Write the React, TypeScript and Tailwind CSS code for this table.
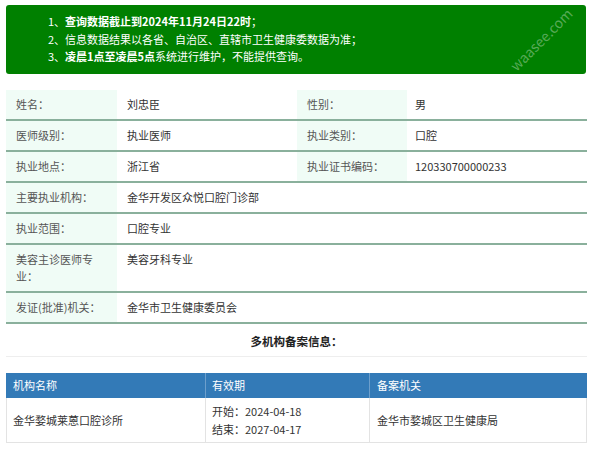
import React from 'react';

const font = { fontFamily: '"Noto Sans CJK SC", "Liberation Sans", sans-serif' };

type Cell = { label: string; value: string };

const rows: Array<[Cell, Cell | null]> = [
  [{ label: '姓名：', value: '刘忠臣' }, { label: '性别：', value: '男' }],
  [{ label: '医师级别：', value: '执业医师' }, { label: '执业类别：', value: '口腔' }],
  [{ label: '执业地点：', value: '浙江省' }, { label: '执业证书编码：', value: '120330700000233' }],
  [{ label: '主要执业机构：', value: '金华开发区众悦口腔门诊部' }, null],
  [{ label: '执业范围：', value: '口腔专业' }, null],
  [{ label: '美容主诊医师专业：', value: '美容牙科专业' }, null],
  [{ label: '发证(批准)机关：', value: '金华市卫生健康委员会' }, null],
];

export default function App() {
  return (
    <div className="relative min-h-[455px] w-[600px] overflow-hidden bg-white text-[11px] text-[#333]" style={font}>
      <div className="ml-[6px] w-[580px] pt-[5px]">
        {/* Notice box */}
        <div className="relative overflow-hidden rounded-[3px] bg-[#008000] py-[8px] pl-[42px] leading-[17.5px] text-white">
          <p>
            1、<b>查询数据截止到2024年11月24日22时</b>；
          </p>
          <p>2、信息数据结果以各省、自治区、直辖市卫生健康委数据为准；</p>
          <p>
            3、<b>凌晨1点至凌晨5点</b>系统进行维护，不能提供查询。
          </p>
          {/* watermark */}
          <span className="pointer-events-none absolute right-[4px] top-[26px] -rotate-45 select-none whitespace-nowrap text-[14px] text-white/35">
            waasee.com
          </span>
        </div>

        {/* Detail table */}
        <div className="mt-[16px] w-[581px]">
          {rows.map(([a, b], i) => (
            <div
              key={a.label}
              className={`flex ${i === 0 ? '' : 'border-t-2 border-[#8ab09c]'}`}
            >
              <div className="w-[111px] shrink-0 bg-[#f0fcf6] py-[6px] pl-[10px] pr-[12px] leading-[17px] text-[#555]">
                {a.label}
              </div>
              {b ? (
                <>
                  <div className="w-[180px] shrink-0 py-[6px] pl-[10px] leading-[17px]">{a.value}</div>
                  <div className="w-[110px] shrink-0 bg-[#f0fcf6] py-[6px] pl-[10px] leading-[17px] text-[#555]">
                    {b.label}
                  </div>
                  <div className="flex-1 py-[6px] pl-[8px] leading-[17px]">{b.value}</div>
                </>
              ) : (
                <div className="flex-1 py-[6px] pl-[10px] leading-[17px]">{a.value}</div>
              )}
            </div>
          ))}
          <div className="border-t-2 border-[#8ab09c]" />
        </div>

        {/* Multi-institution header */}
        <div className="mt-[8px] w-[581px] border-b border-[#eeeeee] pb-[6px] text-center text-[11.5px] font-bold leading-[18px] text-[#222]">
          多机构备案信息：
        </div>

        <div className="mt-[16px] w-[581px]">
          <div className="flex bg-[#337ab7] leading-[25px] text-white">
            <div className="w-[199px] pl-[7px]">机构名称</div>
            <div className="w-[164px] border-l border-[#6d9fcc] pl-[6px]">有效期</div>
            <div className="flex-1 border-l border-[#6d9fcc] pl-[7px]">备案机关</div>
          </div>
          <div className="flex border-x border-b border-[#e3e3e3] leading-[18px]">
            <div className="flex w-[198px] items-center pl-[6px]">金华婺城莱蒽口腔诊所</div>
            <div className="w-[164px] border-l border-[#e3e3e3] py-[4px] pl-[6px]">
              <p>开始：2024-04-18</p>
              <p>结束：2027-04-17</p>
            </div>
            <div className="flex flex-1 items-center border-l border-[#e3e3e3] pl-[7px]">金华市婺城区卫生健康局</div>
          </div>
        </div>
      </div>
    </div>
  );
}
